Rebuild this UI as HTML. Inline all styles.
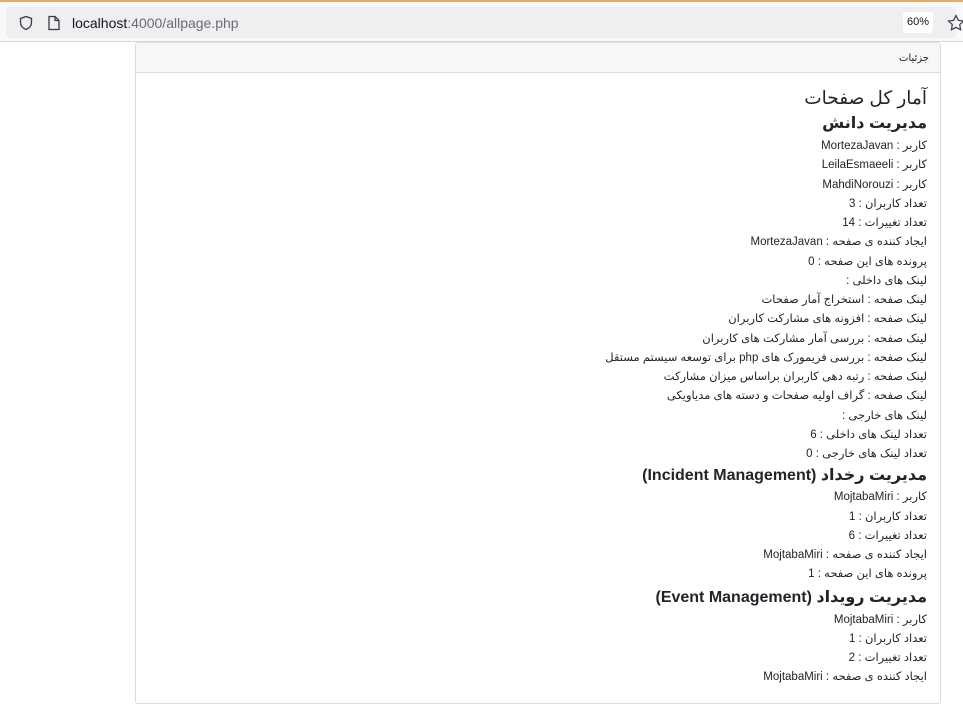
<!DOCTYPE html>
<html><head><meta charset="utf-8"><style>
html,body{margin:0;padding:0;width:963px;height:685px;overflow:hidden;background:#fff;font-family:"Liberation Sans","DejaVu Sans",sans-serif}
.top{position:absolute;left:0;top:0;width:963px;height:2px;background:#f0a860}
.bar{position:absolute;left:0;top:2px;width:963px;height:39px;background:#f9f9fb;border-bottom:1px solid #d8d8dc}
.url{position:absolute;left:6px;top:5px;width:950px;height:31px;background:#efeff2;border-radius:4px}
.url .t{position:absolute;left:66px;top:8px;font-size:14px;color:#15141a}
.url .t span{color:#6b6b70}
.zoom{position:absolute;left:897px;top:5px;width:30px;height:21px;background:#fff;border-radius:3px;font-size:11px;text-align:center;line-height:21px;color:#15141a}
.card{position:absolute;left:135px;top:42px;width:804px;height:660px;border:1px solid #dcdcdc;border-radius:3px}
.hd{height:29px;background:#f7f7f7;border-bottom:1px solid #dcdcdc;font-size:10px;direction:rtl;padding-right:11px;line-height:31px;color:#222}
.bd{direction:rtl;padding-right:13px;padding-top:12px;color:#212529}
.h1{font-size:18.5px;line-height:26px;height:26px}
.h3{font-size:16px;font-weight:bold;line-height:26px;height:26px}
.h3b{font-size:16px;font-weight:bold;line-height:24px;height:24px}
.l{font-size:11.5px;line-height:19.25px;height:19.25px}
</style></head><body>
<div class="top"></div>
<div class="bar"><div class="url">
<svg style="position:absolute;left:12px;top:8px" width="16" height="16" viewBox="0 0 16 16"><path d="M8 1.5L2.5 3.5v4c0 3.5 2.5 5.8 5.5 7 3-1.2 5.5-3.5 5.5-7v-4z" fill="none" stroke="#3a3a40" stroke-width="1.3"/></svg>
<svg style="position:absolute;left:41px;top:8px" width="14" height="16" viewBox="0 0 14 16"><path d="M2 1.5h6l4 4v9H2z M8 1.5v4h4" fill="none" stroke="#3a3a40" stroke-width="1.3"/></svg>
<div class="t">localhost<span>:4000/allpage.php</span></div>
<div class="zoom">60%</div>
</div>
<svg style="position:absolute;left:947px;top:12px" width="18" height="18" viewBox="0 0 18 18"><path d="M9 1.5l2.3 4.8 5.2.7-3.8 3.6.9 5.2L9 13.3l-4.6 2.5.9-5.2L1.5 7l5.2-.7z" fill="none" stroke="#3a3a40" stroke-width="1.2"/></svg>
</div>
<div class="card">
<div class="hd">جزئیات</div>
<div class="bd">
<div class="h1">آمار کل صفحات</div>
<div class="h3">مدیریت دانش</div>
<div class="l">کاربر : MortezaJavan</div>
<div class="l">کاربر : LeilaEsmaeeli</div>
<div class="l">کاربر : MahdiNorouzi</div>
<div class="l">تعداد کاربران : 3</div>
<div class="l">تعداد تغییرات : 14</div>
<div class="l">ایجاد کننده ی صفحه : MortezaJavan</div>
<div class="l">پرونده های این صفحه : 0</div>
<div class="l">لینک های داخلی :</div>
<div class="l">لینک صفحه : استخراج آمار صفحات</div>
<div class="l">لینک صفحه : افزونه های مشارکت کاربران</div>
<div class="l">لینک صفحه : بررسی آمار مشارکت های کاربران</div>
<div class="l">لینک صفحه : بررسی فریمورک های php برای توسعه سیستم مستقل</div>
<div class="l">لینک صفحه : رتبه دهی کاربران براساس میزان مشارکت</div>
<div class="l">لینک صفحه : گراف اولیه صفحات و دسته های مدیاویکی</div>
<div class="l">لینک های خارجی :</div>
<div class="l">تعداد لینک های داخلی : 6</div>
<div class="l">تعداد لینک های خارجی : 0</div>
<div class="h3b">مدیریت رخداد (Incident Management)</div>
<div class="l">کاربر : MojtabaMiri</div>
<div class="l">تعداد کاربران : 1</div>
<div class="l">تعداد تغییرات : 6</div>
<div class="l">ایجاد کننده ی صفحه : MojtabaMiri</div>
<div class="l">پرونده های این صفحه : 1</div>
<div class="h3">مدیریت رویداد (Event Management)</div>
<div class="l">کاربر : MojtabaMiri</div>
<div class="l">تعداد کاربران : 1</div>
<div class="l">تعداد تغییرات : 2</div>
<div class="l">ایجاد کننده ی صفحه : MojtabaMiri</div>
</div></div>
</body></html>
